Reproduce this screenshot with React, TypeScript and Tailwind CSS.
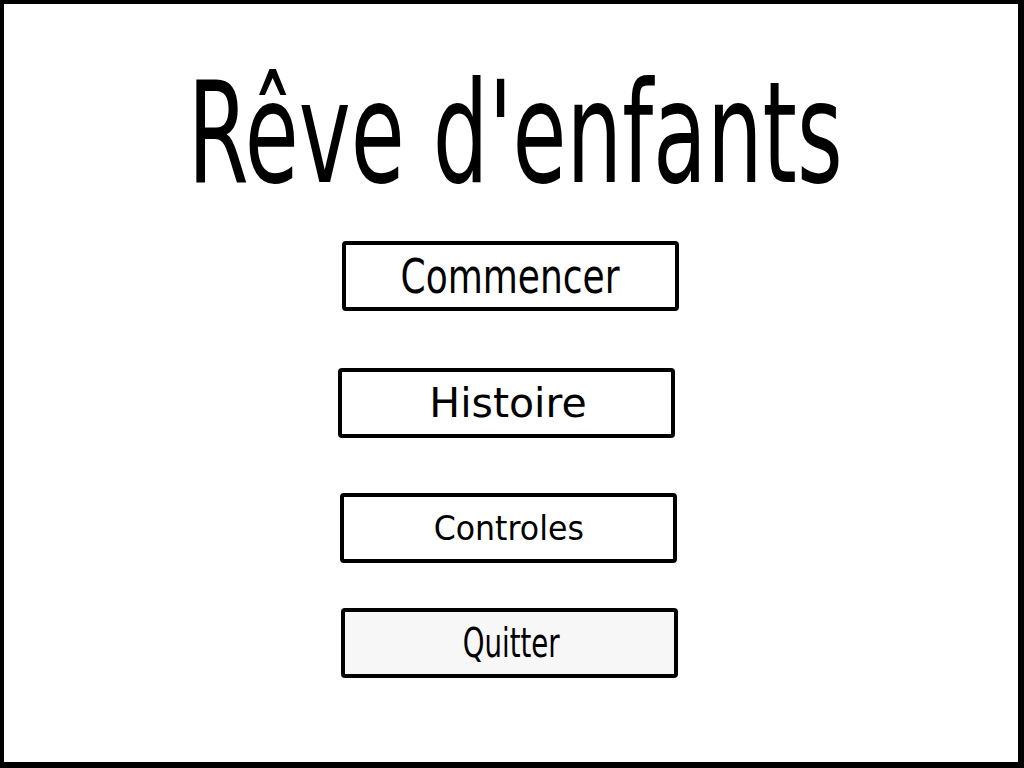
const MENU = [
  { label: "Commencer", size: "text-[48px]", scale: "scale-x-[0.75]", wrap: "mt-[37px] ml-[338px]", bg: "bg-white" },
  { label: "Histoire", size: "text-[41px]", scale: "scale-x-100", wrap: "mt-[57px] ml-[334px] pl-[3px]", bg: "bg-white" },
  { label: "Controles", size: "text-[34px]", scale: "scale-x-[0.93]", wrap: "mt-[55px] ml-[336px]", bg: "bg-white" },
  { label: "Quitter", size: "text-[40px]", scale: "scale-x-[0.69]", wrap: "mt-[45px] ml-[337px] pl-[4px]", bg: "bg-[#f7f7f7]" },
];

export default function App() {
  return (
    <div
      className="box-border flex h-[768px] w-[1024px] flex-col border-t-4 border-l-4 border-r-[6px] border-b-[6px] border-black bg-white text-black"
      style={{ fontFamily: '"DejaVu Sans", "Liberation Sans", sans-serif' }}
    >
      <h1 className="mt-[60px] flex justify-center pl-[8px] text-[140px] leading-none font-normal">
        <span className="inline-block scale-x-[0.627] whitespace-nowrap">Rêve d'enfants</span>
      </h1>

      <nav className="flex flex-col items-start">
        {MENU.map((item) => (
          <button
            key={item.label}
            type="button"
            className={`${item.wrap} ${item.bg} box-border flex h-[70px] w-[337px] items-center justify-center rounded-[4px] border-4 border-black`}
          >
            <span className={`${item.size} ${item.scale} inline-block leading-none whitespace-nowrap`}>
              {item.label}
            </span>
          </button>
        ))}
      </nav>
    </div>
  );
}
